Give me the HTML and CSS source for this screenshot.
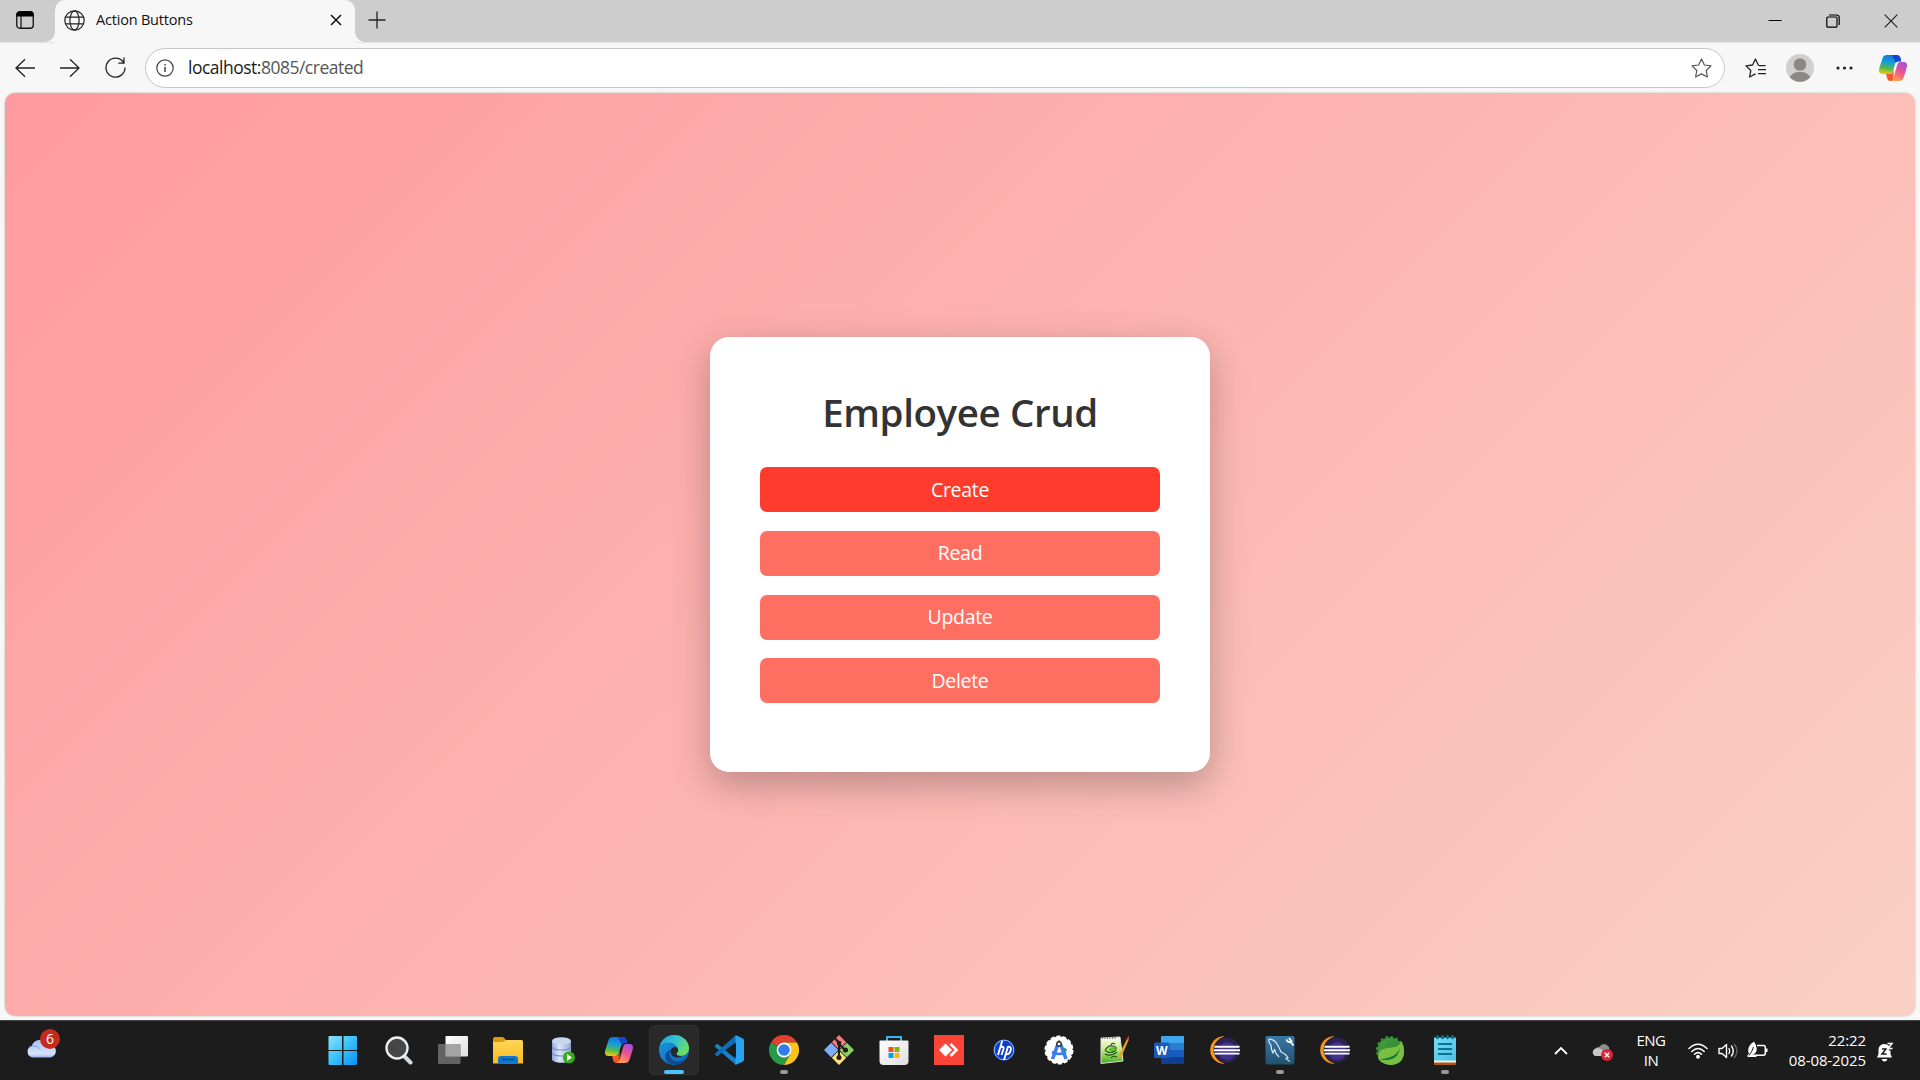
FILE: index.html
```html
<!DOCTYPE html>
<html lang="en">
<head>
<meta charset="utf-8">
<title>Action Buttons</title>
<link rel="stylesheet" href="styles.css">
</head>
<body>
<svg class="defs" width="0" height="0" aria-hidden="true">
  <defs>
    <linearGradient id="cpBlue" x1="0.3" y1="0" x2="0.1" y2="1"><stop offset="0" stop-color="#1478dc"/><stop offset=".35" stop-color="#169fd8"/><stop offset=".65" stop-color="#52b84e"/><stop offset="1" stop-color="#f8cf08"/></linearGradient>
    <linearGradient id="cpPink" x1="0.8" y1="0" x2="0.3" y2="1"><stop offset="0" stop-color="#a34fe0"/><stop offset=".5" stop-color="#ec5390"/><stop offset="1" stop-color="#ffa350"/></linearGradient>
    <linearGradient id="win" x1="0" y1="0" x2="1" y2="1"><stop offset="0" stop-color="#8be3ff"/><stop offset=".5" stop-color="#38c0fb"/><stop offset="1" stop-color="#0a90f8"/></linearGradient>
    <linearGradient id="folder" x1="0" y1="0" x2="0" y2="1"><stop offset="0" stop-color="#ffd65a"/><stop offset="1" stop-color="#fbb91d"/></linearGradient>
    <linearGradient id="db" x1="0" y1="0" x2="1" y2="0"><stop offset="0" stop-color="#8ba9dc"/><stop offset=".4" stop-color="#dce7f8"/><stop offset="1" stop-color="#8ea9d4"/></linearGradient>
    <linearGradient id="edgeTop" x1="0" y1="0" x2="1" y2=".6"><stop offset="0" stop-color="#209ee0"/><stop offset=".5" stop-color="#35c2cf"/><stop offset="1" stop-color="#6de15d"/></linearGradient>
    <linearGradient id="edgeLow" x1="0" y1="0" x2="1" y2="1"><stop offset="0" stop-color="#1b9de2"/><stop offset="1" stop-color="#0b5fb0"/></linearGradient>
    <linearGradient id="cloud" x1="0" y1="0" x2="0" y2="1"><stop offset="0" stop-color="#a9c3f3"/><stop offset=".8" stop-color="#d6e2f8"/><stop offset="1" stop-color="#8fb0ea"/></linearGradient>
    <linearGradient id="back" x1="0" y1="0" x2="1" y2="1"><stop offset="0" stop-color="#fff"/><stop offset="1" stop-color="#dedede"/></linearGradient>
    <linearGradient id="grass" x1="0" y1="0" x2="0" y2="1"><stop offset="0" stop-color="#fdfdf5"/><stop offset=".45" stop-color="#c9ec8b"/><stop offset="1" stop-color="#3fae1b"/></linearGradient>
    <linearGradient id="sea" x1="0" y1="0" x2="0" y2="1"><stop offset="0" stop-color="#3a79a6"/><stop offset="1" stop-color="#22506f"/></linearGradient>
    <linearGradient id="spring" x1="0" y1="0" x2="1" y2="1"><stop offset="0" stop-color="#4ba33c"/><stop offset="1" stop-color="#1f7a35"/></linearGradient>
    <linearGradient id="paper" x1="0" y1="0" x2="1" y2="1"><stop offset="0" stop-color="#7adcf5"/><stop offset="1" stop-color="#4ac1e4"/></linearGradient>
    <symbol id="copilot" viewBox="0 0 28 26">
      <path d="M8.200 0H18q2.500 0 3.300 2.500l.9 3.500h-3Q17 6 16.300 8l-2.600 8.500Q13 19 10.500 19H3.500Q0 19 0 15.500 0 14 .5 12.500L3.600 3Q4.500 0 8.200 0z" fill="url(#cpBlue)"/>
      <path d="M13 0H18q2.500 0 3.300 2.500l1 4h-3.300Q17.500 6.500 16.800 8z" fill="#1544c9"/>
      <path d="M7 19h4q2.300 0 3-2.300L15 13l-1 13h-2.800q-2 0-2.800-2z" fill="#f7552c"/>
      <path d="M19.200 7H25q3 0 3 3.500 0 1-.4 2.500l-3 9.500Q23.500 26 20 26h-8.500q2 0 2.800-2.500l4-14Q18.800 7 21 7z" fill="url(#cpPink)"/>
    </symbol>
    <symbol id="eclipse" viewBox="0 0 30 30">
      <path d="M14 1.200A13.800 13.800 0 0 0 14 28.800L20 15z" fill="#f7941e"/>
      <circle cx="17" cy="15" r="13.400" fill="#1c1c1c"/>
      <circle cx="17" cy="15" r="12.600" fill="#2c2255"/><circle cx="17" cy="16" r="9" fill="#41338a"/>
      <path d="M4.500 11.800h25M4 15.200h26M4.500 18.600h25" stroke="#fff" stroke-width="1.900"/>
    </symbol>
  </defs>
</svg>

<header class="tabstrip">
  <div class="workspace"><svg width="18" height="18" viewBox="0 0 18 18"><rect x=".75" y=".75" width="16.500" height="16.500" rx="3" fill="none" stroke="#111" stroke-width="1.300"/><path d="M.5 5.500V3.500a3 3 0 0 1 3-3h11a3 3 0 0 1 3 3v2z" fill="#000"/><path d="M5 5v12" stroke="#111" stroke-width="1.200"/></svg></div>
  <div class="tab">
    <svg class="globe" width="21" height="21" viewBox="0 0 21 21" fill="none" stroke="#222" stroke-width="1.200"><circle cx="10.500" cy="10.500" r="9.700"/><ellipse cx="10.500" cy="10.500" rx="4.600" ry="9.700"/><path d="M1.500 7.200h18M1.500 13.800h18"/></svg>
    <span class="tab-title">Action Buttons</span>
    <svg class="tab-close" width="12" height="12" viewBox="0 0 12 12" stroke="#111" stroke-width="1.500"><path d="M1 1l10 10M11 1L1 11"/></svg>
  </div>
  <svg class="newtab" width="18" height="18" viewBox="0 0 18 18" stroke="#222" stroke-width="1.300"><path d="M9 .5v17M.5 9h17"/></svg>
  <div class="winctl">
    <svg width="14" height="14" viewBox="0 0 14 14"><path d="M.5 6.500h13" stroke="#000"/></svg>
    <svg width="14" height="14" viewBox="0 0 14 14" fill="none" stroke="#000" stroke-width="1.200"><rect x=".8" y="3" width="10.200" height="10.200" rx="1"/><path d="M3 1h7.500q2.700 0 2.700 2.700V11"/></svg>
    <svg width="14" height="14" viewBox="0 0 14 14" stroke="#222" stroke-width="1.200"><path d="M.7.700l12.600 12.600M13.300.700L.7 13.300"/></svg>
  </div>
</header>

<nav class="toolbar">
  <div class="nav-icons">
    <svg width="20" height="20" viewBox="0 0 20 20"><path d="M20 10H1M10 1.200L1 10l9 8.800"/></svg>
    <svg width="20" height="20" viewBox="0 0 20 20"><path d="M0 10h19M10 1.200l9 8.800-9 8.800"/></svg>
    <svg width="21" height="21" viewBox="0 0 21 21"><path d="M18.800 6A9.500 9.500 0 1 0 20 10.500M19 .5V6.200h-5.700"/></svg>
  </div>
  <div class="address">
    <svg width="18" height="18" viewBox="0 0 18 18" fill="none" stroke="#444" stroke-width="1.200"><circle cx="9" cy="9" r="8.200"/><path d="M9 8v5M9 5v1.600" stroke-width="1.500"/></svg>
    <span class="url"><b>localhost:</b>8085/created</span>
    <svg class="star" width="21" height="20" viewBox="0 0 21 20"><path d="M10.500 1l2.900 6 6.600.9-4.800 4.600 1.200 6.500-5.900-3.100L4.600 19l1.200-6.500L1 7.900 7.600 7z" fill="none" stroke="#555" stroke-width="1.200" stroke-linejoin="round"/></svg>
  </div>
  <div class="tools">
    <svg width="21" height="20" viewBox="0 0 21 20"><path d="M14 7.200h-.6L10.500 1 7.600 7 1 7.900l4.800 4.600L4.600 19l5.900-3.100M14 7.600h6.500M13 11.600h8M13 15.600h8" fill="none" stroke="#222" stroke-width="1.300" stroke-linejoin="round"/></svg>
    <svg width="28" height="28" viewBox="0 0 28 28"><circle cx="14" cy="14" r="14" fill="#d2cfcc"/><circle cx="14" cy="10.500" r="6.300" fill="#8b8785"/><path d="M4 23.500q1.500-5.500 10-5.500t10 5.500a14 14 0 0 1-20 0z" fill="#8b8785"/></svg>
    <svg width="17" height="4" viewBox="0 0 17 4" fill="#222"><circle cx="2" cy="2" r="1.600"/><circle cx="8.500" cy="2" r="1.600"/><circle cx="15" cy="2" r="1.600"/></svg>
    <svg width="28" height="26"><use href="#copilot"/></svg>
  </div>
</nav>

<main class="page">
  <section class="card">
    <h1>Employee Crud</h1>
    <button class="btn active">Create</button>
    <button class="btn">Read</button>
    <button class="btn">Update</button>
    <button class="btn">Delete</button>
  </section>
</main>

<footer class="taskbar">
  <div class="weather">
    <svg width="30" height="20" viewBox="0 0 30 20"><path d="M6 19.500a6 6 0 0 1-.3-11.500A9 9 0 0 1 22 6.500a6.600 6.600 0 0 1 2.500 13z" fill="url(#cloud)"/><path d="M3 9.500q7-4 11 2" fill="none" stroke="#7e9fe0"/></svg>
    <span class="count">6</span>
  </div>
  <div class="apps">
    <div class="app"><svg viewBox="0 0 30 30"><path d="M.5 2a1 1 0 0 1 1-1H14v14H.5zM15.500 1H28a1 1 0 0 1 1 1v13H15.500zM.5 16H14v14H1.500a1 1 0 0 1-1-1zM15.500 16H29v13a1 1 0 0 1-1 1H15.500z" fill="url(#win)"/></svg></div>
    <div class="app"><svg viewBox="0 0 30 30"><path d="M21 21l6.500 6.500" stroke="#d5dae0" stroke-width="4" stroke-linecap="round"/><circle cx="14" cy="13" r="10.500" fill="#474747" stroke="#eceff2" stroke-width="2.400"/></svg></div>
    <div class="app"><svg viewBox="0 0 30 30"><rect x="7.500" y="1" width="22.500" height="20.500" rx="1" fill="url(#back)"/><rect x="0" y="9" width="22.500" height="20" rx="1" fill="#6b6b6b" fill-opacity=".9"/><path d="M7.500 9h15v12.500h-15z" fill="#a4a4a4"/></svg></div>
    <div class="app"><svg viewBox="0 0 30 30"><path d="M0 4q0-2 2-2h8l3 3v5H0z" fill="#dc9a08"/><path d="M0 7h10l3-2h15.500Q30 5 30 6.500V28.500H0z" fill="url(#folder)"/><path d="M5 28.500V24q0-3 3-3h14q3 0 3 3v4.500z" fill="#1277cc"/><path d="M9 24.500h12" stroke="#084b88" stroke-width="1.400" stroke-linecap="round"/></svg></div>
    <div class="app"><svg viewBox="0 0 30 30"><path d="M4 6v18c0 5 19 5 19 0V6z" fill="url(#db)"/><ellipse cx="13.500" cy="6" rx="9.500" ry="3.800" fill="#c8d6ee"/><path d="M4 12c0 4 19 4 19 0M4 18c0 4 19 4 19 0" fill="none" stroke="#6c8abc"/><circle cx="21" cy="22.500" r="6" fill="#37a91a"/><path d="M19 19l5 3.500-5 3.500z" fill="#fff"/></svg></div>
    <div class="app"><svg viewBox="0 0 30 30"><use href="#copilot" x="1" y="2" width="28" height="26"/></svg></div>
    <div class="app current"><svg viewBox="0 0 30 30"><circle cx="15" cy="15" r="15" fill="url(#edgeLow)"/><path d="M1 10.500C3 4 9 0 15 0c9 0 15 6.500 15 13 0 5-4 8-8.500 8-3 0-4.500-1.200-4-2.700 1.500-1 1.700-2.300 1.500-3.600C18.500 10 14 7.500 9.500 7.500 6 7.500 3 8.500 1 10.500z" fill="url(#edgeTop)"/><path d="M11.500 15c-4 7 4 15.500 15.500 9C22 31 11 32 7 25c-2-5 .5-9 4.500-10z" fill="#114a92"/><path d="M19 14.500c.3 1.500-.4 2.800-1.500 3.800-.5 2 2 3 6 2.500-5 3.500-12 1.500-12-4 0-5 7-6.500 7.500-2.300z" fill="#24292c"/></svg></div>
    <div class="app"><svg viewBox="0 0 30 30"><path d="M3 8.500L22 24v6L.5 11.500z" fill="#1481c9"/><path d="M.5 19L22 0v7L3 21.500z" fill="#0b70b8"/><path d="M21.500 0l7 3.200Q30 4 30 5.500v19q0 1.500-1.500 2.300l-7 3.200z" fill="#28a3f0"/><path d="M22 8v14l-9-7z" fill="#1c1c1c"/></svg></div>
    <div class="app open"><svg viewBox="0 0 30 30"><path d="M15 15L2 7.500A15 15 0 0 1 28 7.500H15z" fill="#e2402f"/><path d="M15 15L2 7.500A15 15 0 0 0 15 30l6.500-11.300z" fill="#269a46"/><path d="M15 15l6.500 3.700L15 30A15 15 0 0 0 28 7.500H15z" fill="#fcc31e"/><circle cx="15" cy="15" r="7.400" fill="#fff"/><circle cx="15" cy="15" r="5.800" fill="#2f7de9"/></svg></div>
    <div class="app"><svg viewBox="0 0 30 30"><path d="M15 0l7.200 7.200L15 14.500 7.800 7.200z" fill="#f37c7c"/><path d="M22.800 7.800L30 15l-7.200 7.200L15.600 15z" fill="#8bd067"/><path d="M7.200 7.800l7.200 7.200-7.200 7.200L0 15z" fill="#80aef8"/><path d="M15 15.600l7.200 7.200L15 30l-7.200-7.200z" fill="#fde17c"/><path d="M11 3.500l4 4V23M15 9l6 6" fill="none" stroke="#241c1c" stroke-width="2.200"/><circle cx="15" cy="8" r="2.300" fill="#241c1c"/><circle cx="21.500" cy="15" r="2.500" fill="#241c1c"/><circle cx="15" cy="22.500" r="2.500" fill="#241c1c"/></svg></div>
    <div class="app"><svg viewBox="0 0 30 30"><path d="M8 7V2h14v5" fill="none" stroke="#30b9ec" stroke-width="2"/><path d="M.5 6.500q0-1 1-1h27q1 0 1 1V26q0 4-4 4h-21q-4 0-4-4z" fill="url(#back)"/><path d="M9.500 12h5v5h-5z" fill="#f25022"/><path d="M15.500 12h5v5h-5z" fill="#7fba00"/><path d="M9.500 18h5v5h-5z" fill="#00a4ef"/><path d="M15.500 18h5v5h-5z" fill="#ffb900"/></svg></div>
    <div class="app"><svg viewBox="0 0 30 30"><path d="M0 0h30v30H0z" fill="#fc4438"/><path d="M11.500 8.500l6.500 6.500-6.500 6.500L5 15z" fill="#fff"/><path d="M16.500 9l6 6-6 6" fill="none" stroke="#fff" stroke-width="2.500"/></svg></div>
    <div class="app"><svg viewBox="0 0 30 30"><circle cx="15" cy="15" r="10.700" fill="#0b3fc4"/><circle cx="15" cy="15" r="9.800" fill="none" stroke="#9db8f5" stroke-width="1"/><path d="M13.200 6L9 20M11.500 12.500q4-2 3 1.500l-2 6M19 11.500L15 25M18.500 12q4.500-1 3.200 3.200-1.200 4.500-4.500 4" fill="none" stroke="#fff" stroke-width="1.900"/></svg></div>
    <div class="app"><svg viewBox="0 0 30 30"><circle cx="15" cy="15" r="13.500" fill="#fff" stroke="#fff" stroke-width="2" stroke-dasharray="4 2.060"/><path d="M18 12.500q5 0 5 3l-4 3z" fill="#34a853"/><path d="M14 9L8.500 24M16.500 9L22 24" stroke="#3c7df0" stroke-width="3.600"/><path d="M8 17q7 4 14 0" fill="none" stroke="#3c7df0" stroke-width="2.700"/><circle cx="15" cy="9" r="2.200" fill="#fff" stroke="#333" stroke-width="1.500"/><path d="M15 5.500v2" stroke="#333" stroke-width="2"/></svg></div>
    <div class="app"><svg viewBox="0 0 30 30"><path d="M2 3l19-1 3 24-22 2.500z" fill="url(#grass)" stroke="#ddd"/><path d="M3 3h15" stroke="#777" stroke-width="2" stroke-dasharray="1 1.500"/><path d="M9 15q3-5 8-2l-3 4z" fill="#54c52c"/><path d="M6 16q2-6 8-5 5 1 2 5-5 3-9 0M6 19q6 3 12-2M12 10q1-3 4-1M12 23q2-3 6-1" fill="none" stroke="#284f19" stroke-width="1.100"/><path d="M28.500 3L20 20l-1 4 3.500-2.500L30 4z" fill="#e5a62a"/><path d="M27.500 4l2-3 1 1-1 4z" fill="#c44747"/></svg></div>
    <div class="app"><svg viewBox="0 0 30 30"><path d="M7 2q0-1 1-1h21q1 0 1 1v6H7z" fill="#41a5ee"/><path d="M7 8h23v7H7z" fill="#2b7cd3"/><path d="M7 15h23v7H7z" fill="#185abd"/><path d="M7 22h23v6q0 1-1 1H8q-1 0-1-1z" fill="#103f91"/><rect x="0" y="7.500" width="15.500" height="15.500" rx="1.500" fill="#185abd"/><text x="7.700" y="19.500" text-anchor="middle" class="w-letter">W</text></svg></div>
    <div class="app"><svg viewBox="0 0 30 30"><use href="#eclipse" width="30" height="30"/></svg></div>
    <div class="app open"><svg viewBox="0 0 30 30"><rect x=".5" y="1" width="29" height="28.500" rx="2" fill="url(#sea)"/><path d="M4 4q5 0 8 5 2 3 4 8 5 2 7 6l-2 .5q1 1.500 4 3M4 4q-1 3 2 6 0 5 2 8 1-1 1.500-4 1 5 4.500 8" fill="none" stroke="#dcebf4" stroke-width="1.200"/><path d="M21.500 4.500q1 3 4 2.500l3 3.500M24 3l3 4" fill="none" stroke="#fff" stroke-width="1.800"/></svg></div>
    <div class="app"><svg viewBox="0 0 30 30"><use href="#eclipse" width="30" height="30"/></svg></div>
    <div class="app"><svg viewBox="0 0 30 30"><circle cx="15" cy="15" r="12.600" fill="url(#spring)" stroke="#359039" stroke-width="3" stroke-dasharray="2.500 2.450"/><path d="M26.500 6c4 8 5 22-9 24C12 30.500 6 28 3.500 24 1 15 9 13 17 12.500c5-.5 8-3 9.500-6.500z" fill="#78bf43"/><path d="M25 12c-2 8-9 11-20 12.500q12 2 17-4 2.500-4 3-8.500z" fill="#167a35"/></svg></div>
    <div class="app open"><svg viewBox="0 0 30 30"><path d="M4 25h22v5H4z" fill="#ad560e"/><path d="M4 23h22v4.500H4z" fill="#eee"/><path d="M4 2.500h22v23H4z" fill="url(#paper)"/><path d="M8 9h14M8 14h14M8 19h14" stroke="#0b7495" stroke-width="2"/><path d="M7.500 1.200v1.800M12.500 1.200v1.800M17.500 1.200v1.800M22.500 1.200v1.800" stroke="#0a6c8c" stroke-width="2.600" stroke-linecap="round"/></svg></div>
  </div>
  <div class="tray">
    <svg class="chev" width="14" height="9" viewBox="0 0 14 9"><path d="M1 8l6-6 6 6" fill="none" stroke="#fff" stroke-width="1.800"/></svg>
    <svg class="onedrive" width="21" height="18" viewBox="0 0 21 18"><path d="M3 13q-4-3-.5-7Q5 4 7 4q5-6 10 0 1 3-1 9z" fill="#8f8f8f"/><path d="M3 13q-4-3-1-6.500 4-3 7.500 0 4 4 1 6.500z" fill="#c7c7c7"/><circle cx="15" cy="12" r="6" fill="#dc2433"/><path d="M12.800 9.800l4.400 4.400M17.200 9.800l-4.400 4.400" stroke="#fff" stroke-width="1.500"/></svg>
    <div class="lang"><span>ENG</span><span>IN</span></div>
    <svg class="wifi" width="20" height="16" viewBox="0 0 20 16" fill="none" stroke="#fff" stroke-width="1.500" stroke-linecap="round"><path d="M1 5.500q9-8.500 18 0M3.800 8.500q6.200-6 12.400 0M6.500 11.300q3.500-3.300 7 0"/><circle cx="10" cy="13.800" r="1.200" fill="#fff"/></svg>
    <svg class="vol" width="20" height="16" viewBox="0 0 20 16" fill="none" stroke="#fff" stroke-width="1.400" stroke-linejoin="round" stroke-linecap="round"><path d="M1 5.500h3l4.500-4v13L4 10.500H1zM11 5.500q1.500 2.500 0 5M13.500 3q3.500 5 0 10"/><path d="M16.500 1.500q5 6.500 0 13" stroke="#666"/></svg>
    <svg class="bat" width="21" height="17" viewBox="0 0 21 17"><path d="M10 4.500h6.500q1.800 0 1.800 1.800v6q0 2-2 2H9" fill="none" stroke="#fff" stroke-width="1.500"/><path d="M18.500 7.500h2v3.500h-2z" fill="#fff"/><path d="M7 .5q3.500 5 2.500 9.500-1.500 3.500-5 3.500h5V16H.5V14l1.500-1Q-1 6 7 .5z" fill="#fff"/><path d="M2 14.500Q5.500 10 6.500 6" stroke="#1c1c1c" fill="none"/></svg>
    <div class="clock"><span>22:22</span><span>08-08-2025</span></div>
    <svg class="bell" width="18" height="20" viewBox="0 0 18 20"><path d="M1 15.500L2.500 12V8A6 6 0 0 1 13 4v4.500h1.500V12l1.500 3.500zM5.500 17h6q-1 2.500-3 2.500t-3-2.500z" fill="#fff"/><path d="M6 7h4l-4 5h4.500" fill="none" stroke="#1c1c1c" stroke-width="1.500"/><path d="M11.500 1.500H16L12 6.500h4.500" fill="none" stroke="#fff" stroke-width="1.500"/></svg>
  </div>
</footer>
</body>
</html>
```
FILE: styles.css
```css
* { box-sizing: border-box; }
body {
  margin: 0;
  width: 1920px;
  height: 1080px;
  display: flex;
  flex-direction: column;
  overflow: hidden;
  background: #f7f7f7;
  font-family: "Open Sans", "Noto Sans", sans-serif;
}
svg { display: block; flex: none; }
.defs { position: absolute; }

.tabstrip {
  height: 42px;
  flex: none;
  display: flex;
  background: #cdcdcd;
}
.workspace {
  width: 55px;
  padding: 11px 0 0 16px;
}
.tab {
  width: 300px;
  height: 43px;
  display: flex;
  align-items: center;
  padding: 0 13px 3px 9px;
  background: #f7f7f7;
  border-radius: 10px 10px 0 0;
  position: relative;
}
.tab::before, .tab::after {
  content: "";
  position: absolute;
  bottom: 1px;
  width: 10px;
  height: 10px;
}
.tab::before { left: -10px; background: radial-gradient(circle at 0 0, transparent 9.5px, #f7f7f7 10px); }
.tab::after { right: -10px; background: radial-gradient(circle at 100% 0, transparent 9.5px, #f7f7f7 10px); }
.tab-title { margin: 0 0 2px 11px; font-size: 14.5px; letter-spacing: -0.2px; color: #111; flex: 1; white-space: nowrap; }
.newtab { margin: 11px 0 0 13px; }
.winctl { margin: 14px 22px 0 auto; display: flex; gap: 44px; }

.toolbar {
  height: 51px;
  flex: none;
  display: flex;
  align-items: center;
  padding-bottom: 1px;
  border-top: 1px solid #e3e3e3;
}
.nav-icons { width: 145px; padding-left: 15px; display: flex; align-items: center; gap: 25px; fill: none; stroke: #222; stroke-width: 1.3; }
.address {
  width: 1580px;
  height: 40px;
  display: flex;
  align-items: center;
  padding: 0 12px 0 10px;
  background: #fff;
  border: 1px solid #c8c8c8;
  border-radius: 20px;
}
.url { flex: 1; margin: 0 0 1px 14px; font-size: 17.5px; letter-spacing: -0.5px; color: #555; }
.url b { font-weight: 400; color: #1a1a1a; }
.tools { display: flex; align-items: center; padding-left: 20px; }
.tools svg:nth-child(2) { margin-left: 20px; }
.tools svg:nth-child(3) { margin-left: 22px; }
.tools svg:nth-child(4) { margin-left: 26px; }

.page {
  height: 923px;
  flex: none;
  margin: 0 5px 4px;
  display: flex;
  align-items: center;
  justify-content: center;
  border-radius: 10px;
  background: linear-gradient(135deg, #ff9a9e, #fad0c4);
  box-shadow: 0 0 2px rgba(0, 0, 0, 0.3);
}
.card {
  width: 500px;
  height: 435px;
  padding: 50px;
  border-radius: 19px;
  background: #fff;
  box-shadow: 0 12.5px 37.5px rgba(0, 0, 0, 0.25);
  display: flex;
  flex-direction: column;
}
h1 {
  margin: 0 0 27px;
  height: 53px;
  line-height: 51px;
  font-size: 38.5px;
  font-weight: 600;
  letter-spacing: -0.4px;
  color: #333;
  text-align: center;
}
.btn {
  height: 45px;
  flex: none;
  margin: 0 0 18.75px;
  padding: 0 0 1px;
  border: 0;
  border-radius: 7px;
  background: #ff6f61;
  color: #fff;
  font: 19.5px "Open Sans", "Noto Sans", sans-serif;
  letter-spacing: -0.3px;
}
.btn.active { background: #ff3b2e; }

.taskbar {
  height: 60px;
  flex: none;
  display: flex;
  background: #1c1c1c;
  border-top: 1px solid #444;
  color: #fff;
}
.weather { width: 315px; padding: 17px 0 0 26px; position: relative; }
.count {
  position: absolute;
  left: 40px;
  top: 8px;
  width: 20px;
  height: 20px;
  border-radius: 50%;
  background: #c42b1c;
  font-size: 14px;
  line-height: 20px;
  text-align: center;
}
.apps { display: flex; }
.app {
  width: 55.1px;
  height: 59px;
  display: flex;
  flex-direction: column;
  align-items: center;
  padding: 14px 0 0 1px;
}
.app svg { width: 30px; height: 30px; }
.app.current {
  width: 50px;
  height: 50px;
  margin: 4px 2.1px 0 3px;
  padding: 9px 0 0;
  border: 1px solid #303030;
  border-radius: 5px;
  background: #292929;
}
.app.open::after, .app.current::after {
  content: "";
  flex: none;
  width: 8px;
  height: 4px;
  margin-top: 5px;
  border-radius: 2px;
  background: #999;
}
.app.current::after { width: 20px; background: #4cc2ff; }
.w-letter { font: 700 12px "Open Sans", sans-serif; fill: #fff; }
.tray { margin-left: auto; display: flex; align-items: center; padding-right: 26px; font-size: 15px; line-height: 20px; }
.lang, .clock { display: flex; flex-direction: column; letter-spacing: -0.2px; padding-bottom: 1px; }
.chev { margin-right: 24px; }
.onedrive { margin-right: 23px; margin-top: 3px; }
.lang { width: 30px; align-items: center; white-space: nowrap; letter-spacing: -0.5px; }
.wifi { margin-left: 22px; }
.vol { margin-left: 10px; }
.bat { margin-left: 9px; margin-top: -3px; }
.clock { width: 98px; align-items: flex-end; white-space: nowrap; letter-spacing: -0.1px; }
.bell { margin-left: 10px; margin-top: 2px; }
```
